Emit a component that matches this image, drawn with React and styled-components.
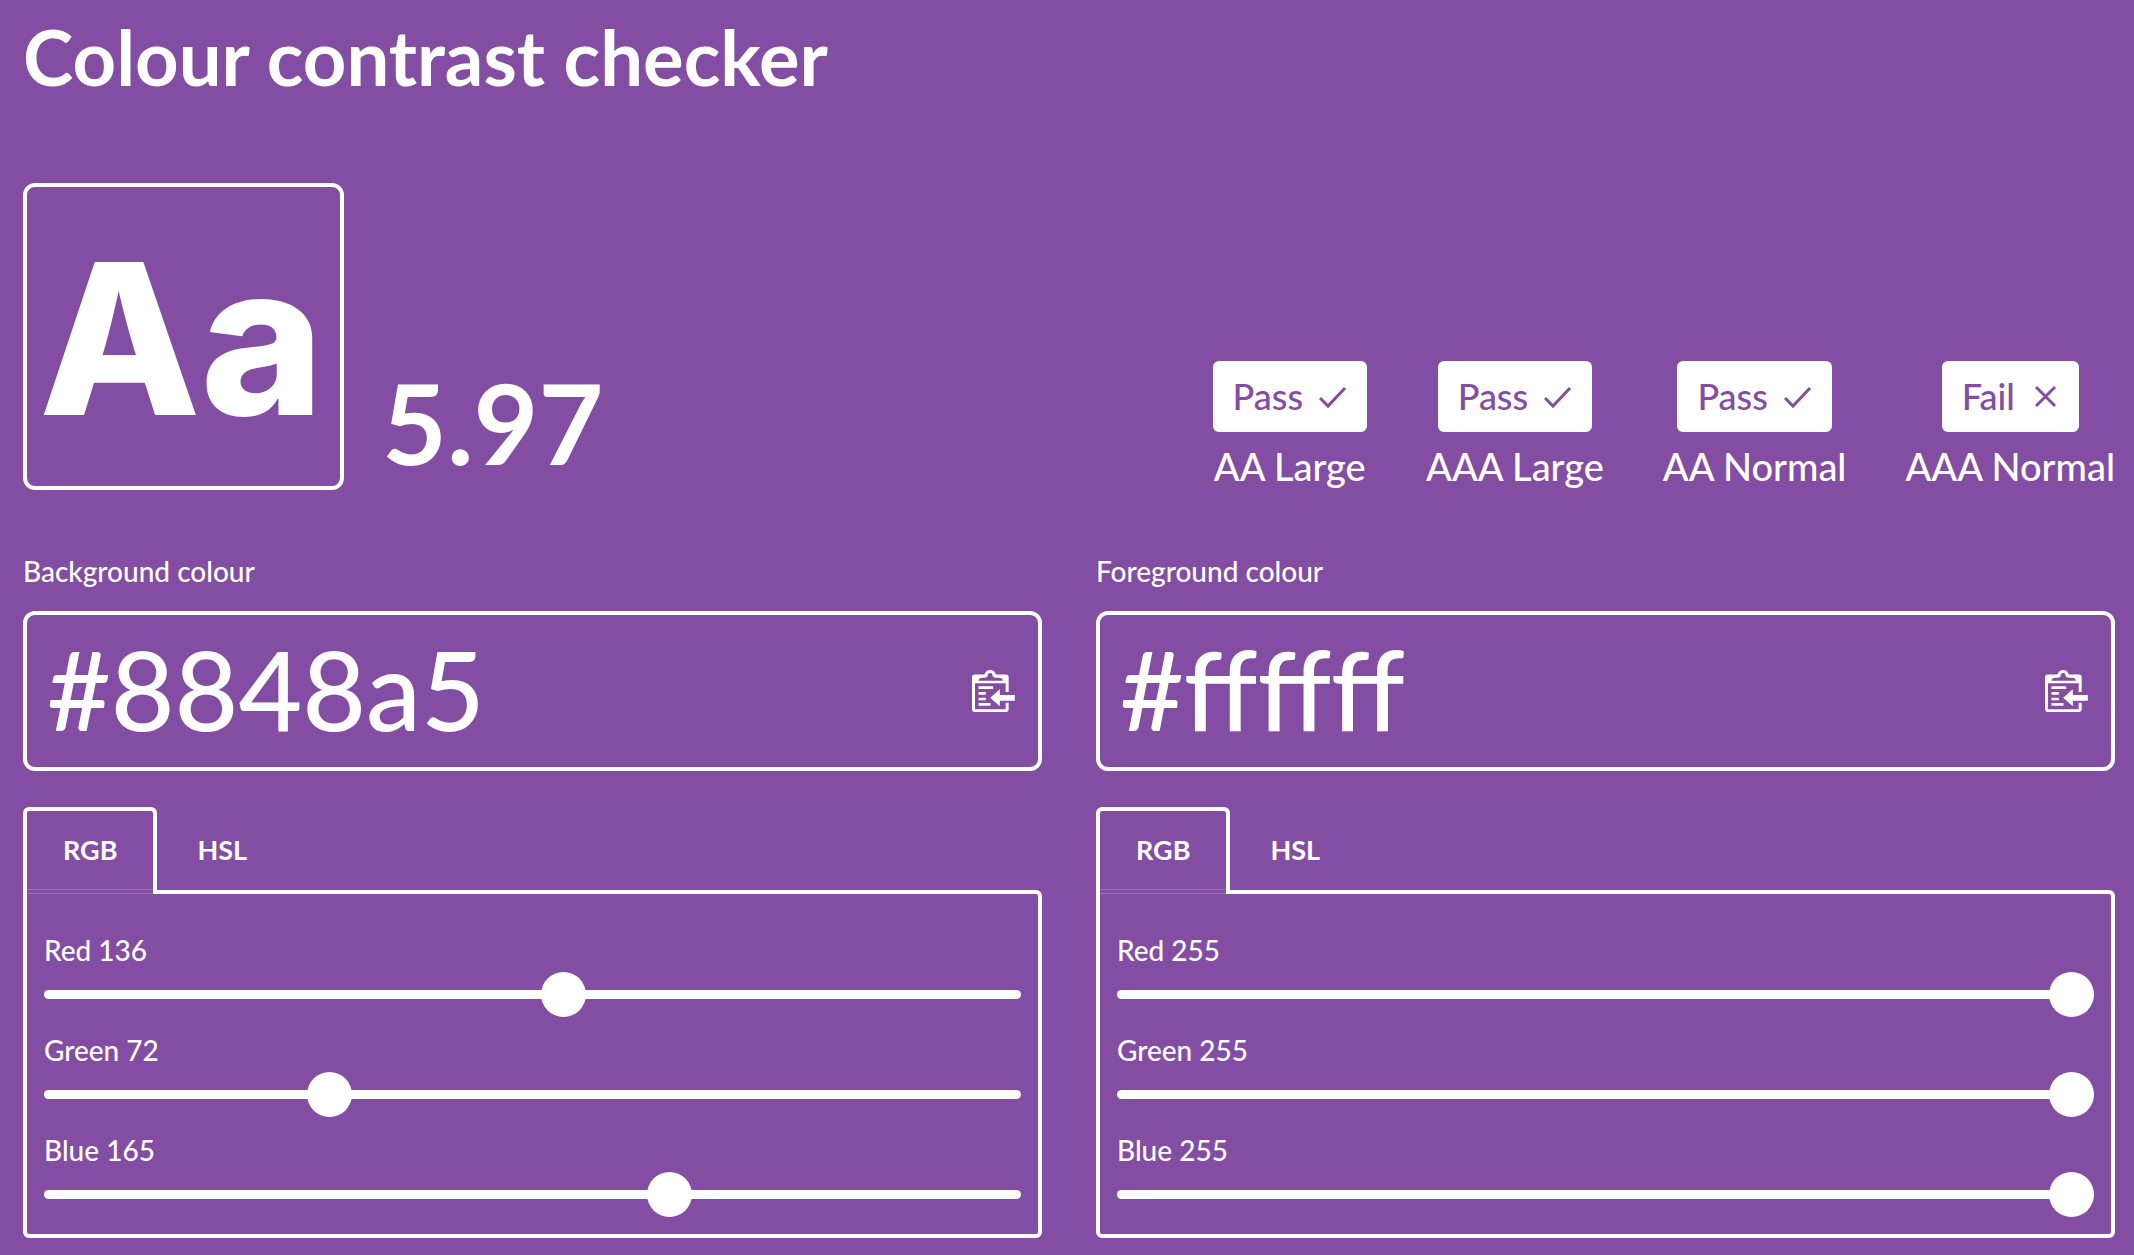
import React, { useState } from 'react';
import styled, { createGlobalStyle } from 'styled-components';

const purple = '#824da3';

const GlobalStyle = createGlobalStyle`
  *, *::before, *::after { box-sizing: border-box; }
  body {
    margin: 0;
    background: ${purple};
    color: #fff;
    font-family: Lato, "Liberation Sans", sans-serif;
    font-weight: 500;
  }
  button, input { font: inherit; color: inherit; }
`;

const Page = styled.main`
  padding: 13px 19px 16px 23px;
`;

const Title = styled.h1`
  margin: 0 0 83px;
  font-size: 76px;
  line-height: 87px;
  font-weight: 700;
`;

const Summary = styled.section`
  display: flex;
  align-items: flex-end;
  gap: 38px;
  margin-bottom: 62px;
`;

const Sample = styled.div`
  display: flex;
  align-items: center;
  justify-content: center;
  width: 321px;
  height: 307px;
  padding: 4px 4px 0 0;
  border: 4px solid #fff;
  border-radius: 12px;
  font-family: Inter, "Liberation Sans", sans-serif;
  font-size: 210px;
  line-height: 260px;
  font-weight: 800;
`;

const Ratio = styled.output`
  flex: 1;
  font-size: 112px;
  line-height: 136px;
  font-weight: 700;
`;

const Results = styled.ul`
  display: flex;
  gap: 59px;
  margin: 0;
  padding: 0;
  list-style: none;
`;

const Result = styled.li`
  display: flex;
  flex-direction: column;
  align-items: center;
  gap: 11px;
  font-size: 38px;
  line-height: 47px;
`;

const Badge = styled.span`
  display: flex;
  align-items: center;
  gap: 16px;
  height: 71px;
  padding: 0 20px;
  border-radius: 6px;
  background: #fff;
  color: ${purple};
  font-size: 36px;
`;

const Columns = styled.div`
  display: grid;
  grid-template-columns: repeat(2, minmax(0, 1fr));
  gap: 54px;
`;

const FieldLabel = styled.label`
  display: block;
  margin-bottom: 20px;
  font-size: 28px;
  line-height: 39px;
`;

const Field = styled.div`
  display: flex;
  align-items: center;
  height: 160px;
  margin-bottom: 36px;
  padding: 0 23px 0 20px;
  border: 4px solid #fff;
  border-radius: 12px;
`;

const HexInput = styled.input`
  flex: 1;
  min-width: 0;
  padding: 0 0 6px;
  border: 0;
  outline: 0;
  background: none;
  font-size: 110px;
  line-height: 130px;
`;

const PasteButton = styled.button`
  display: flex;
  padding: 0;
  border: 0;
  background: none;
  cursor: pointer;
`;

const Tabs = styled.div`
  display: flex;
  margin-bottom: -4px;
`;

const Tab = styled.button`
  position: relative;
  height: 87px;
  padding: 0 36px 6px;
  border: 4px solid ${(p) => (p.$active ? '#fff' : 'transparent')};
  border-bottom: 0;
  border-radius: 6px 6px 0 0;
  background: ${(p) => (p.$active ? purple : 'none')};
  font-size: 27px;
  font-weight: 700;
  cursor: pointer;

  &::after {
    content: '';
    display: ${(p) => (p.$active ? 'block' : 'none')};
    position: absolute;
    left: 0;
    right: 0;
    bottom: 0;
    height: 5px;
    border: solid rgba(255, 255, 255, 0.2);
    border-width: 1px 0;
  }
`;

const Panel = styled.div`
  display: grid;
  gap: 14px;
  padding: 37px 17px 17px;
  border: 4px solid #fff;
  border-radius: 0 6px 6px 6px;
`;

const Channel = styled.div`
  display: grid;
  gap: 2px;
`;

const ChannelLabel = styled.label`
  font-size: 28px;
  line-height: 39px;
`;

const Slider = styled.input`
  appearance: none;
  width: 100%;
  height: 45px;
  margin: 0;
  background: none;
  cursor: pointer;

  &::-webkit-slider-runnable-track {
    height: 9px;
    border-radius: 5px;
    background: #fff;
  }
  &::-webkit-slider-thumb {
    appearance: none;
    width: 45px;
    height: 45px;
    margin-top: -18px;
    border-radius: 50%;
    background: #fff;
  }
`;

const CheckIcon = () => (
  <svg width="28" height="28" viewBox="0 0 28 28" fill="none" stroke="currentColor" strokeWidth="3" aria-hidden="true">
    <path d="M1 15l8 8L26 5" />
  </svg>
);

const CrossIcon = () => (
  <svg width="28" height="28" viewBox="0 0 28 28" fill="none" stroke="currentColor" strokeWidth="3" aria-hidden="true">
    <path d="M5 4l19 19M24 4L5 23" />
  </svg>
);

const PasteIcon = () => (
  <svg width="43" height="42" viewBox="0 0 128 126" fill="none" aria-hidden="true">
    <path d="M105 66V22q0-4-4-4H8q-4 0-4 4v95q0 5 5 5h91q5 0 5-5V98" stroke="#fff" strokeWidth="9" />
    <path d="M6 16h98v24H6z" fill="#fff" />
    <path d="M32 16q5 0 6-5Q42 0 54 0t16 11q1 5 6 5v10H32z" fill="#fff" />
    <path d="M19 32q1-9 12-9h6q10 0 10-8 0-6 7-6t7 6q0 8 10 8h9q11 0 12 9z" fill={purple} />
    <path d="M19 53h44M19 70h22M19 87h22M19 103h36" stroke="#fff" strokeWidth="8" />
    <path d="M54 83l29-25v17h45v17H83v17z" fill="#fff" />
  </svg>
);

const results = [
  { level: 'AA Large', pass: true },
  { level: 'AAA Large', pass: true },
  { level: 'AA Normal', pass: true },
  { level: 'AAA Normal', pass: false },
];

function ColourPicker({ id, label, initialHex, initialChannels }) {
  const [hex, setHex] = useState(initialHex);
  const [mode, setMode] = useState('RGB');
  const [channels, setChannels] = useState(initialChannels);

  return (
    <section>
      <FieldLabel htmlFor={`${id}-hex`}>{label}</FieldLabel>
      <Field>
        <HexInput id={`${id}-hex`} value={hex} onChange={(e) => setHex(e.target.value)} spellCheck={false} />
        <PasteButton type="button" aria-label="Paste colour">
          <PasteIcon />
        </PasteButton>
      </Field>
      <Tabs role="tablist">
        {['RGB', 'HSL'].map((name) => (
          <Tab
            key={name}
            type="button"
            role="tab"
            aria-selected={mode === name}
            $active={mode === name}
            onClick={() => setMode(name)}
          >
            {name}
          </Tab>
        ))}
      </Tabs>
      <Panel role="tabpanel">
        {Object.entries(channels).map(([name, value]) => (
          <Channel key={name}>
            <ChannelLabel htmlFor={`${id}-${name}`}>{`${name} ${value}`}</ChannelLabel>
            <Slider
              id={`${id}-${name}`}
              type="range"
              min="0"
              max="255"
              value={value}
              onChange={(e) => setChannels({ ...channels, [name]: Number(e.target.value) })}
            />
          </Channel>
        ))}
      </Panel>
    </section>
  );
}

export default function App() {
  return (
    <>
      <GlobalStyle />
      <Page>
        <Title>Colour contrast checker</Title>
        <Summary>
          <Sample>Aa</Sample>
          <Ratio>5.97</Ratio>
          <Results>
            {results.map(({ level, pass }) => (
              <Result key={level}>
                <Badge>
                  {pass ? 'Pass' : 'Fail'}
                  {pass ? <CheckIcon /> : <CrossIcon />}
                </Badge>
                {level}
              </Result>
            ))}
          </Results>
        </Summary>
        <Columns>
          <ColourPicker
            id="background"
            label="Background colour"
            initialHex="#8848a5"
            initialChannels={{ Red: 136, Green: 72, Blue: 165 }}
          />
          <ColourPicker
            id="foreground"
            label="Foreground colour"
            initialHex="#ffffff"
            initialChannels={{ Red: 255, Green: 255, Blue: 255 }}
          />
        </Columns>
      </Page>
    </>
  );
}
